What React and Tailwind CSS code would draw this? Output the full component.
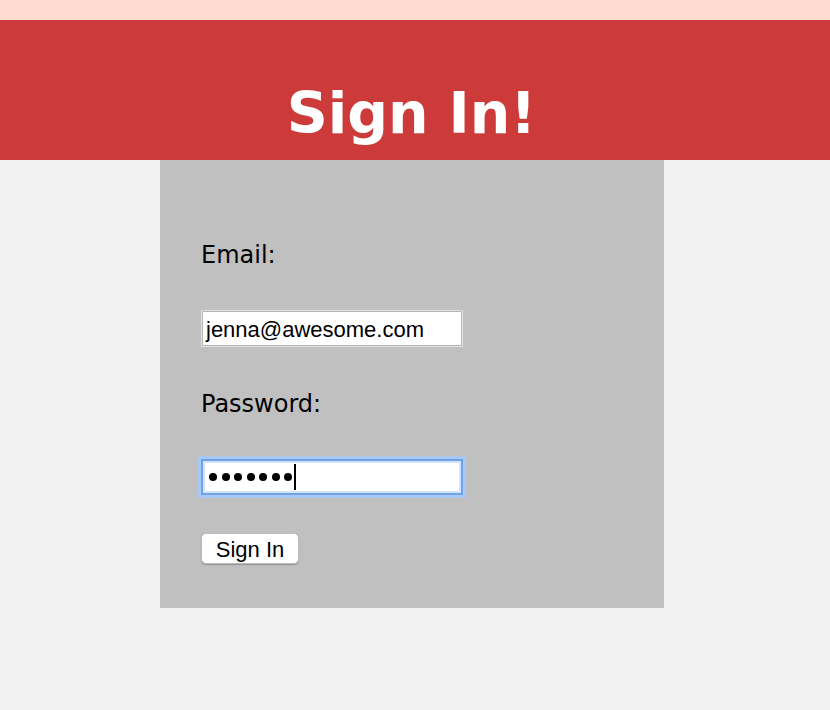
import React from "react";

const SignInPage = () => {
  return (
    <div className="min-h-[710px] w-full bg-[#f2f2f2]">
      {/* top strip */}
      <div className="h-[20px] bg-[#ffdbcf]" />

      {/* header */}
      <div className="h-[140px] bg-[#cc3a3a] flex items-end justify-center pr-[7px]">
        <h1 className="text-white font-bold text-[57px] leading-[66px] mb-[14px] font-['DejaVu_Sans',Verdana,sans-serif]">
          Sign In!
        </h1>
      </div>

      {/* form panel */}
      <div className="ml-[160px] w-[504px] h-[448px] bg-[#c0c0c0] pt-[81px] pl-[41px]">
        <div className="h-[28px] leading-[28px] text-[24px] text-black font-['DejaVu_Sans',Verdana,sans-serif]">
          Email:
        </div>

        <div className="mt-[41px] w-[262px] h-[37px] bg-white border border-[#e2e2e2] shadow-[inset_0_0_0_1px_#b5b5b5] flex items-center pl-[4px] pt-[2px] text-[22px] text-black font-['Liberation_Sans',Arial,sans-serif]">
          jenna@awesome.com
        </div>

        <div className="mt-[43px] h-[28px] leading-[28px] text-[24px] text-black font-['DejaVu_Sans',Verdana,sans-serif]">
          Password:
        </div>

        <div className="mt-[41px] w-[262px] h-[36px] bg-white border-2 border-[#6fa3ec] shadow-[0_0_0_3px_#a8c9f4,inset_0_0_0_2px_#d2e3fb] flex items-center pl-[6px]">
          <div className="flex items-center gap-[4.5px]">
            {[0, 1, 2, 3, 4, 5, 6].map((i) => (
              <span key={i} className="block w-[8px] h-[8px] rounded-full bg-black" />
            ))}
          </div>
          <span className="ml-[2px] block w-[2px] h-[26px] bg-black" />
        </div>

        <button className="mt-[38px] w-[98px] h-[31px] bg-white rounded-[5px] border border-[#bdbdbd] shadow-[0_1px_1px_rgba(0,0,0,0.25)] pt-[3px] text-[22px] leading-none text-black font-['Liberation_Sans',Arial,sans-serif] flex items-center justify-center">
          Sign In
        </button>
      </div>
    </div>
  );
};

export default SignInPage;
